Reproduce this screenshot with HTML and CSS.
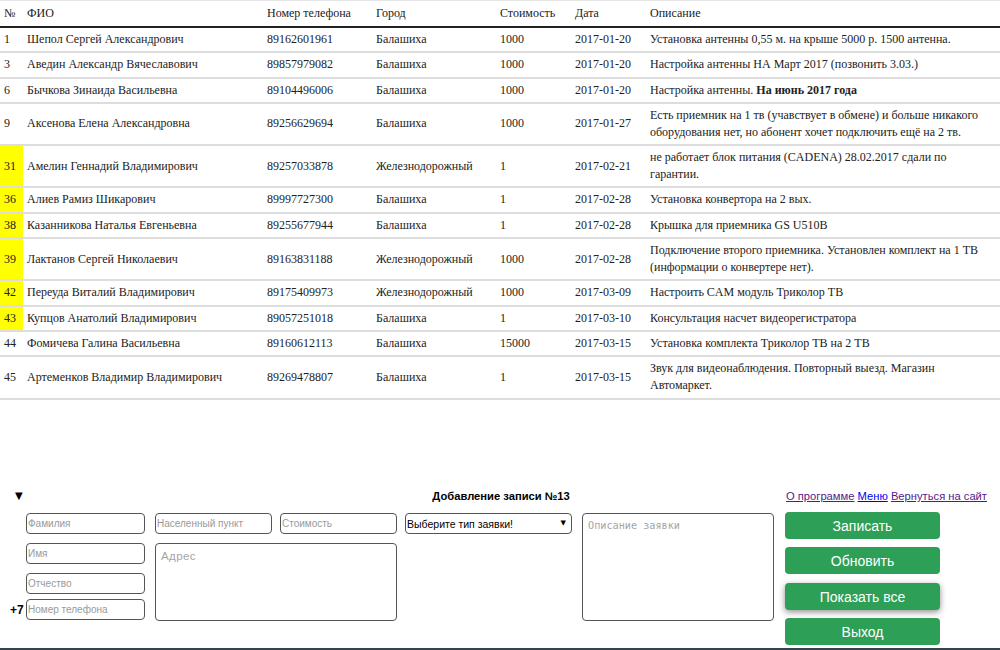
FILE: index.html
```html
<!DOCTYPE html>
<html lang="ru">
<head>
<meta charset="utf-8">
<title>Заявки</title>
<link rel="stylesheet" href="styles.css">
</head>
<body>
<table class="grid">
  <colgroup>
    <col class="c-num"><col class="c-fio"><col class="c-tel"><col class="c-city"><col class="c-cost"><col class="c-date"><col class="c-desc">
  </colgroup>
  <thead>
    <tr><th>№</th><th>ФИО</th><th>Номер телефона</th><th>Город</th><th>Стоимость</th><th>Дата</th><th>Описание</th></tr>
  </thead>
  <tbody>
    <tr><td>1</td><td>Шепол Сергей Александрович</td><td>89162601961</td><td>Балашиха</td><td>1000</td><td>2017-01-20</td><td class="desc">Установка антенны 0,55 м. на крыше 5000 р. 1500 антенна.</td></tr>
    <tr><td>3</td><td>Аведин Александр Вячеславович</td><td>89857979082</td><td>Балашиха</td><td>1000</td><td>2017-01-20</td><td class="desc">Настройка антенны НА Март 2017 (позвонить 3.03.)</td></tr>
    <tr><td>6</td><td>Бычкова Зинаида Васильевна</td><td>89104496006</td><td>Балашиха</td><td>1000</td><td>2017-01-20</td><td class="desc">Настройка антенны. <b>На июнь 2017 года</b></td></tr>
    <tr><td>9</td><td>Аксенова Елена Александровна</td><td>89256629694</td><td>Балашиха</td><td>1000</td><td>2017-01-27</td><td class="desc">Есть приемник на 1 тв (учавствует в обмене) и больше никакого оборудования нет, но абонент хочет подключить ещё на 2 тв.</td></tr>
    <tr><td class="mark">31</td><td>Амелин Геннадий Владимирович</td><td>89257033878</td><td>Железнодорожный</td><td>1</td><td>2017-02-21</td><td class="desc">не работает блок питания (CADENA) 28.02.2017 сдали по гарантии.</td></tr>
    <tr><td class="mark">36</td><td>Алиев Рамиз Шикарович</td><td>89997727300</td><td>Балашиха</td><td>1</td><td>2017-02-28</td><td class="desc">Установка конвертора на 2 вых.</td></tr>
    <tr><td class="mark">38</td><td>Казанникова Наталья Евгеньевна</td><td>89255677944</td><td>Балашиха</td><td>1</td><td>2017-02-28</td><td class="desc">Крышка для приемника GS U510B</td></tr>
    <tr><td class="mark">39</td><td>Лактанов Сергей Николаевич</td><td>89163831188</td><td>Железнодорожный</td><td>1000</td><td>2017-02-28</td><td class="desc">Подключение второго приемника. Установлен комплект на 1 ТВ (информации о конвертере нет).</td></tr>
    <tr><td class="mark">42</td><td>Переуда Виталий Владимирович</td><td>89175409973</td><td>Железнодорожный</td><td>1000</td><td>2017-03-09</td><td class="desc">Настроить CAM модуль Триколор ТВ</td></tr>
    <tr><td class="mark">43</td><td>Купцов Анатолий Владимирович</td><td>89057251018</td><td>Балашиха</td><td>1</td><td>2017-03-10</td><td class="desc">Консультация насчет видеорегистратора</td></tr>
    <tr><td>44</td><td>Фомичева Галина Васильевна</td><td>89160612113</td><td>Балашиха</td><td>15000</td><td>2017-03-15</td><td class="desc">Установка комплекта Триколор ТВ на 2 ТВ</td></tr>
    <tr><td>45</td><td>Артеменков Владимир Владимирович</td><td>89269478807</td><td>Балашиха</td><td>1</td><td>2017-03-15</td><td class="desc">Звук для видеонаблюдения. Повторный выезд. Магазин Автомаркет.</td></tr>
  </tbody>
</table>

<div class="panel">
  <div class="panel-head">
    <span class="toggle">▼</span>
    <span class="title">Добавление записи №13</span>
    <span class="links"><a href="#" class="visited">О программе</a> <a href="#">Меню</a> <a href="#" class="visited">Вернуться на сайт</a></span>
  </div>
  <div class="panel-body">
    <div class="col-person">
      <div class="field-row first"><span class="prefix"></span><input class="inp" placeholder="Фамилия"></div>
      <div class="field-row gap9"><span class="prefix"></span><input class="inp" placeholder="Имя"></div>
      <div class="field-row gap9"><span class="prefix"></span><input class="inp" placeholder="Отчество"></div>
      <div class="field-row gap5"><span class="prefix">+7</span><input class="inp" placeholder="Номер телефона"></div>
    </div>
    <div class="col-place">
      <div class="place-row"><input class="inp inp-sm" placeholder="Населенный пункт"><input class="inp inp-sm" placeholder="Стоимость"></div>
      <textarea class="area area-addr" placeholder="Адрес"></textarea>
    </div>
    <div class="col-type">
      <div class="select-wrap">
        <select class="sel"><option>Выберите тип заявки!</option></select>
      </div>
    </div>
    <div class="col-desc">
      <textarea class="area area-desc" placeholder="Описание заявки"></textarea>
    </div>
    <div class="col-btns">
      <button class="btn">Записать</button>
      <button class="btn b2">Обновить</button>
      <button class="btn b3 hover">Показать все</button>
      <button class="btn b4">Выход</button>
    </div>
  </div>
  <div class="bottom-line"></div>
</div>
</body>
</html>
```

FILE: styles.css
```css
html, body {
  margin: 0;
  padding: 0;
  height: 650px;
  overflow: hidden;
}
body {
  display: flex;
  flex-direction: column;
  background: #fff;
  color: #222;
  font-family: "Liberation Serif", "Times New Roman", serif;
}

.grid {
  width: 1000px;
  border-collapse: collapse;
  table-layout: fixed;
  font-size: 12px;
  line-height: 17px;
}
.c-num { width: 23px; }
.c-fio { width: 240px; }
.c-tel { width: 109px; }
.c-city { width: 124px; }
.c-cost { width: 75px; }
.c-date { width: 75px; }
.c-desc { width: 354px; }

.grid th,
.grid td {
  padding: 3px 4px 3.3px;
  text-align: left;
  vertical-align: middle;
  font-weight: normal;
  border-top: 2px solid #dddddd;
}
.grid th {
  padding: 4px 4px 4px;
  border-top: 1px solid #e6e6e6;
  border-bottom: 2px solid #222;
}
.grid tbody tr:first-child td {
  border-top-color: #222;
}
.grid tbody tr:last-child td {
  border-bottom: 2px solid #dddddd;
}
.grid td.desc {
  padding-right: 10px;
}
.grid td.mark {
  background: #ffff00;
}

.panel {
  margin-top: auto;
  font-family: "Liberation Sans", Arial, sans-serif;
  color: #000;
}
.panel-head {
  display: grid;
  grid-template-columns: 1fr auto 1fr;
  align-items: center;
  height: 14px;
  padding: 0 13px 0 15px;
  font-size: 11px;
  line-height: 14px;
}
.toggle {
  font-family: "DejaVu Sans", sans-serif;
  font-size: 10px;
}
.title {
  font-weight: bold;
  font-size: 11.2px;
}
.links {
  justify-self: end;
  font-size: 11.2px;
}
.links a {
  color: #0000ee;
}
.links a.visited {
  color: #551a8b;
}

.panel-body {
  display: flex;
  align-items: flex-start;
  margin-top: 9px;
  padding-left: 10px;
}

.inp {
  box-sizing: border-box;
  width: 119px;
  height: 21px;
  margin: 0;
  padding: 0 1px;
  border: 1px solid #555;
  border-radius: 4px;
  background: #fff;
  font-family: "Liberation Sans", Arial, sans-serif;
  font-size: 10px;
  color: #000;
  outline: none;
}
.inp::placeholder {
  color: #9a9a9a;
}

.col-person {
  display: flex;
  flex-direction: column;
  width: 135px;
}
.field-row {
  display: flex;
  align-items: center;
}
.field-row.first { margin-top: 1px; }
.field-row.gap9 { margin-top: 9px; }
.field-row.gap5 { margin-top: 5px; }
.prefix {
  width: 16px;
  font-size: 12px;
  font-weight: bold;
  line-height: 14px;
}

.col-place {
  display: flex;
  flex-direction: column;
  width: 242px;
  margin-left: 10px;
  margin-top: 1px;
}
.place-row {
  display: flex;
  gap: 8px;
}
.inp-sm {
  width: 117px;
}

.area {
  box-sizing: border-box;
  margin: 0;
  padding: 6px 5px;
  border: 1px solid #555;
  border-radius: 4px;
  resize: none;
  font-family: "DejaVu Sans Mono", "Liberation Mono", monospace;
  font-size: 10.2px;
  outline: none;
}
.area::placeholder {
  color: #a5a5a5;
}
.area-addr {
  width: 242px;
  height: 78px;
  margin-top: 9px;
  font-family: "Liberation Sans", Arial, sans-serif;
  font-size: 11.5px;
  letter-spacing: 0.4px;
}

.col-type {
  width: 167px;
  margin-left: 8px;
  margin-top: 1px;
}
.select-wrap {
  position: relative;
}
.select-wrap::after {
  content: "▼";
  position: absolute;
  right: 6px;
  top: 6px;
  font-family: "DejaVu Sans", sans-serif;
  font-size: 7px;
  line-height: 8px;
  color: #000;
  pointer-events: none;
}
.sel {
  -webkit-appearance: none;
  appearance: none;
  box-sizing: border-box;
  width: 167px;
  height: 21px;
  margin: 0;
  padding: 0 1px;
  border: 1px solid #555;
  border-radius: 4px;
  background: #fff;
  color: #000;
  font-family: "Liberation Sans", Arial, sans-serif;
  font-size: 10.5px;
}

.col-desc {
  margin-left: 10px;
  margin-top: 1px;
}
.area-desc {
  width: 192px;
  height: 108px;
}

.col-btns {
  display: flex;
  flex-direction: column;
  margin-left: 11px;
}
.btn {
  box-sizing: border-box;
  width: 155px;
  height: 27px;
  margin: 0;
  padding: 0;
  border: 0;
  border-radius: 4px;
  background: #2e9f56;
  color: #fff;
  font-family: "Liberation Sans", Arial, sans-serif;
  font-size: 14px;
}
.btn.b2 { margin-top: 8px; }
.btn.b3 { margin-top: 9px; }
.btn.b4 { margin-top: 8px; }
.btn.hover {
  box-shadow: 0 2px 6px rgba(0, 0, 0, 0.45);
}

.bottom-line {
  height: 2px;
  margin-top: 3px;
  background: #34444f;
}
```
